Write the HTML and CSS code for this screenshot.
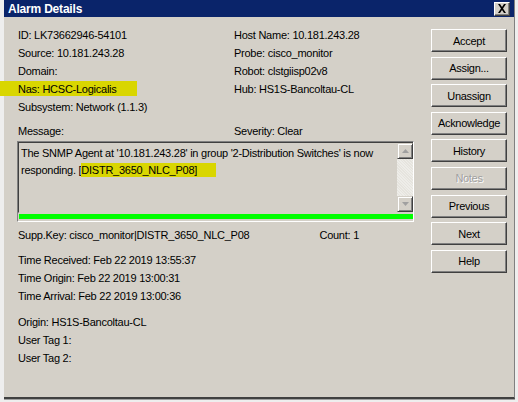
FILE: index.html
```html
<!DOCTYPE html>
<html>
<head>
<meta charset="utf-8">
<link rel="stylesheet" href="styles.css">
</head>
<body>
<div class="window">
  <div class="titlebar">
    <span class="title">Alarm Details</span>
    <span class="close"><svg width="10" height="9" viewBox="0 0 10 9"><path d="M1 0h2l2 3 2-3h2L6 4.5 9 9H7L5 6 3 9H1l3-4.5z" fill="#000"/></svg></span>
  </div>
  <div class="client">
    <div class="main">
      <div class="info">
        <div class="col">
          <div class="row">ID: LK73662946-54101</div>
          <div class="row">Source: 10.181.243.28</div>
          <div class="row">Domain:</div>
          <div class="row"><span class="hl-nas">Nas: HCSC-Logicalis</span></div>
          <div class="row">Subsystem: Network (1.1.3)</div>
        </div>
        <div class="col col2">
          <div class="row">Host Name: 10.181.243.28</div>
          <div class="row">Probe: cisco_monitor</div>
          <div class="row">Robot: clstgiisp02v8</div>
          <div class="row">Hub: HS1S-Bancoltau-CL</div>
        </div>
      </div>
      <div class="info msg-labels">
        <div class="col"><div class="row">Message:</div></div>
        <div class="col col2"><div class="row">Severity: Clear</div></div>
      </div>
      <div class="msgframe">
        <div class="msgbox">
          <div class="msgtext">The SNMP Agent at '10.181.243.28' in group '2-Distribution Switches' is now responding. [<span class="hl-msg">DISTR_3650_NLC_P08]</span></div>
          <div class="scroll">
            <div class="sbtn"><svg width="7" height="4" viewBox="0 0 7 4"><path d="M3.5 0L7 4H0z" fill="#a0a0a0"/></svg></div>
            <div class="track"></div>
            <div class="sbtn"><svg width="7" height="4" viewBox="0 0 7 4"><path d="M0 0h7L3.5 4z" fill="#a0a0a0"/></svg></div>
          </div>
        </div>
        <div class="green"></div>
      </div>
      <div class="info supp">
        <div class="row">Supp.Key: cisco_monitor|DISTR_3650_NLC_P08</div>
        <div class="row count">Count: 1</div>
      </div>
      <div class="group">
        <div class="row">Time Received: Feb 22 2019 13:55:37</div>
        <div class="row">Time Origin: Feb 22 2019 13:00:31</div>
        <div class="row">Time Arrival: Feb 22 2019 13:00:36</div>
      </div>
      <div class="group">
        <div class="row">Origin: HS1S-Bancoltau-CL</div>
        <div class="row">User Tag 1:</div>
        <div class="row">User Tag 2:</div>
      </div>
    </div>
    <div class="buttons">
      <div class="btn">Accept</div>
      <div class="btn">Assign...</div>
      <div class="btn">Unassign</div>
      <div class="btn">Acknowledge</div>
      <div class="btn">History</div>
      <div class="btn disabled">Notes</div>
      <div class="btn">Previous</div>
      <div class="btn">Next</div>
      <div class="btn">Help</div>
    </div>
  </div>
</div>
</body>
</html>
```
FILE: styles.css
```css
html, body {
  margin: 0;
  padding: 0;
  background: #eeeeee;
}
body {
  font-family: "Liberation Sans", Arial, sans-serif;
  font-size: 11px;
  color: #000;
  width: 518px;
  height: 402px;
  overflow: hidden;
}
.window {
  margin-left: 4px;
  width: 510px;
  height: 397px;
  background: #d4d0c8;
  border-right: 1px solid #808080;
  border-bottom: 2px solid #404040;
  box-shadow: 0 1px 0 #a0a0a0;
  display: flex;
  flex-direction: column;
}
.titlebar {
  height: 17px;
  background: #0a246a;
  display: flex;
  align-items: center;
  justify-content: space-between;
  padding: 0 4px 0 4px;
}
.title {
  color: #fff;
  font-weight: bold;
  font-size: 12px;
  letter-spacing: -0.2px;
}
.close {
  width: 14px;
  height: 12px;
  background: #d4d0c8;
  border-top: 1px solid #fff;
  border-left: 1px solid #fff;
  border-right: 1px solid #404040;
  border-bottom: 1px solid #404040;
  box-shadow: inset -1px -1px 0 #808080;
  display: flex;
  align-items: center;
  justify-content: center;
}
.client {
  display: flex;
  flex: 1;
  padding-left: 13px;
}
.main {
  width: 397px;
  padding-top: 9px;
}
.info {
  display: flex;
}
.col {
  width: 215px;
  padding-left: 1px;
}
.col2 {
  width: auto;
}
.row {
  height: 18px;
  line-height: 18px;
  white-space: nowrap;
  letter-spacing: -0.25px;
}
.hl-nas {
  background: #d9d600;
  margin-left: -18px;
  padding: 2px 20px 1px 18px;
}
.msg-labels {
  margin-top: 6px;
}
.msgframe {
  margin-top: 1px;
  border-top: 1px solid #808080;
  border-left: 1px solid #808080;
  border-right: 1px solid #fff;
  border-bottom: 1px solid #fff;
  height: 79px;
  display: flex;
  flex-direction: column;
}
.msgbox {
  display: flex;
  border-top: 1px solid #404040;
  border-left: 1px solid #404040;
  border-bottom: 1px solid #d4d0c8;
  height: 71px;
  box-sizing: border-box;
}
.msgtext {
  flex: 1;
  padding: 2px 2px 0 2px;
  line-height: 17px;
  letter-spacing: -0.25px;
}
.hl-msg {
  background: #d9d600;
  padding: 1px 19px 1px 0;
}
.scroll {
  width: 16px;
  display: flex;
  flex-direction: column;
  background-color: #ebe9e4;
  background-image: repeating-linear-gradient(45deg, #eeede9 0 1px, #e6e4de 1px 2px);
}
.track {
  flex: 1;
}
.sbtn {
  height: 14px;
  background: #d4d0c8;
  border-top: 1px solid #d4d0c8;
  border-left: 1px solid #d4d0c8;
  border-right: 1px solid #404040;
  border-bottom: 1px solid #404040;
  box-shadow: inset 1px 1px 0 #fff, inset -1px -1px 0 #808080;
  display: flex;
  align-items: center;
  justify-content: center;
}
.green {
  height: 5px;
  margin: 1px 0 0 1px;
  background: #00ff00;
}
.supp {
  margin-top: 4px;
  padding-left: 1px;
}
.count {
  margin-left: 70px;
}
.group {
  margin-top: 7px;
  padding-left: 1px;
}
.group + .group {
  margin-top: 8px;
}
.buttons {
  margin-left: 17px;
  padding-top: 12px;
  width: 76px;
  display: flex;
  flex-direction: column;
  gap: 4.6px;
}
.btn {
  height: 23px;
  box-sizing: border-box;
  background: #d4d0c8;
  border-top: 1px solid #fff;
  border-left: 1px solid #fff;
  border-right: 1px solid #404040;
  border-bottom: 1px solid #404040;
  box-shadow: inset -1px -1px 0 #808080;
  display: flex;
  align-items: center;
  justify-content: center;
  letter-spacing: -0.3px;
}
.btn.disabled {
  color: #a0a0a0;
  text-shadow: 1px 1px 0 #fff;
}
```
